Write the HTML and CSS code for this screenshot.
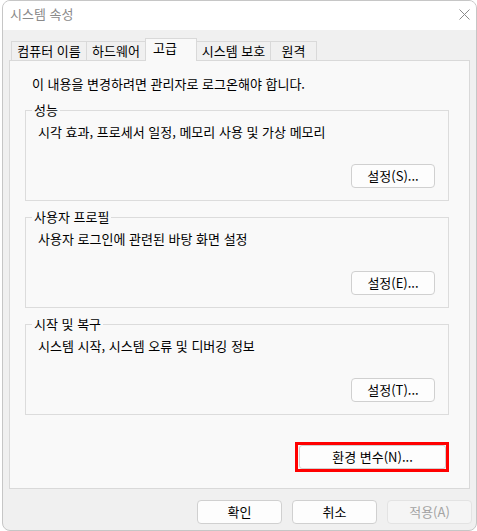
FILE: index.html
```html
<!DOCTYPE html>
<html lang="ko">
<head>
<meta charset="utf-8">
<title>시스템 속성</title>
<link rel="stylesheet" href="styles.css">
</head>
<body>
<div class="window">
  <div class="titlebar">
    <span class="title">시스템 속성</span>
    <svg class="close" width="11" height="11" viewBox="0 0 11 11"><path d="M0.5 0.5 L10.5 10.5 M10.5 0.5 L0.5 10.5" stroke="#8a8a8a" stroke-width="1" fill="none"/></svg>
  </div>
  <div class="body">
    <div class="tabs">
      <div class="tab t1">컴퓨터 이름</div>
      <div class="tab t2">하드웨어</div>
      <div class="tab t3 active">고급</div>
      <div class="tab t4">시스템 보호</div>
      <div class="tab t5">원격</div>
    </div>
    <div class="panel">
      <p class="notice">이 내용을 변경하려면 관리자로 로그온해야 합니다.</p>
      <div class="group">
        <span class="legend">성능</span>
        <p class="desc">시각 효과, 프로세서 일정, 메모리 사용 및 가상 메모리</p>
        <button class="btn set">설정(S)...</button>
      </div>
      <div class="group">
        <span class="legend">사용자 프로필</span>
        <p class="desc">사용자 로그인에 관련된 바탕 화면 설정</p>
        <button class="btn set">설정(E)...</button>
      </div>
      <div class="group">
        <span class="legend">시작 및 복구</span>
        <p class="desc">시스템 시작, 시스템 오류 및 디버깅 정보</p>
        <button class="btn set">설정(T)...</button>
      </div>
      <div class="envrow">
        <div class="highlight"><button class="btn env">환경 변수(N)...</button></div>
      </div>
    </div>
    <div class="footer">
      <button class="btn foot">확인</button>
      <button class="btn foot">취소</button>
      <button class="btn foot" disabled>적용(A)</button>
    </div>
  </div>
</div>
</body>
</html>
```
FILE: styles.css
```css
* { box-sizing: border-box; }
html, body { margin: 0; padding: 0; background: #ffffff; }
body {
  font-family: "Noto Sans CJK KR", "Noto Sans", sans-serif;
  font-size: 13px;
  color: #000;
  width: 477px;
  height: 531px;
  overflow: hidden;
}
.window {
  margin-left: 2px;
  width: 475px;
  height: 531px;
  border: 1px solid #c6c6c6;
  border-radius: 8px;
  overflow: hidden;
  background: #f0f0f0;
  display: flex;
  flex-direction: column;
}
.titlebar {
  height: 29px;
  background: #ffffff;
  display: flex;
  align-items: flex-start;
  justify-content: space-between;
  padding: 5px 6px 0 7px;
}
.title {
  color: #8a8a8a;
  line-height: 16px;
}
.close { margin-top: 3px; }
.body {
  flex: 1;
  padding: 8px 6px 0 6px;
  display: flex;
  flex-direction: column;
}
.tabs {
  display: flex;
  align-items: flex-end;
  padding-left: 2px;
  height: 22px;
  position: relative;
  z-index: 2;
}
.tab {
  height: 19px;
  border: 1px solid #d9d9d9;
  border-bottom: none;
  background: #f0f0f0;
  line-height: 17px;
  text-align: center;
  margin-left: -1px;
  white-space: nowrap;
}
.t1 { width: 76px; margin-left: 0; }
.t2 { width: 60px; }
.t3 { width: 52px; }
.t4 { width: 75px; }
.t5 { width: 47px; }
.tab.active {
  height: 23px;
  margin-bottom: -1px;
  background: #f9f9f9;
  line-height: 16px;
  padding-top: 1px;
  padding-right: 12px;
}
.panel {
  height: 429px;
  background: #f9f9f9;
  border: 1px solid #d9d9d9;
  padding: 15px 20px 0 15px;
  display: flex;
  flex-direction: column;
}
.notice {
  margin: 0 0 18px 7px;
  line-height: 16px;
}
.group {
  position: relative;
  height: 91px;
  border: 1px solid #dcdcdc;
  padding: 13px 13px 12px 12px;
  margin-bottom: 16px;
  display: flex;
  flex-direction: column;
  align-items: flex-start;
}
.group:last-of-type { margin-bottom: 0; }
.legend {
  position: absolute;
  left: 6px;
  top: -9px;
  padding: 0 2px;
  background: #f9f9f9;
  line-height: 16px;
}
.desc {
  margin: 0;
  line-height: 16px;
}
.btn {
  font-family: inherit;
  font-size: 13px;
  color: #000;
  background: #fdfdfd;
  border: 1px solid #d0d0d0;
  border-radius: 4px;
  height: 24px;
  padding: 0;
  line-height: 20px;
}
.set {
  width: 84px;
  margin-top: 24px;
  align-self: flex-end;
}
.envrow {
  display: flex;
  justify-content: flex-end;
  margin-top: 11px;
}
.highlight {
  border: 3px solid #ff0000;
  padding-left: 1px;
  display: flex;
}
.env {
  width: 147px;
  border-radius: 3px;
}
.footer {
  display: flex;
  justify-content: flex-end;
  gap: 10px;
  margin-top: 11px;
  margin-right: -2px;
}
.foot { width: 85px; }
.foot:disabled {
  color: #a3a3a3;
  background: #f5f5f5;
  border-color: #e3e3e3;
}
```
